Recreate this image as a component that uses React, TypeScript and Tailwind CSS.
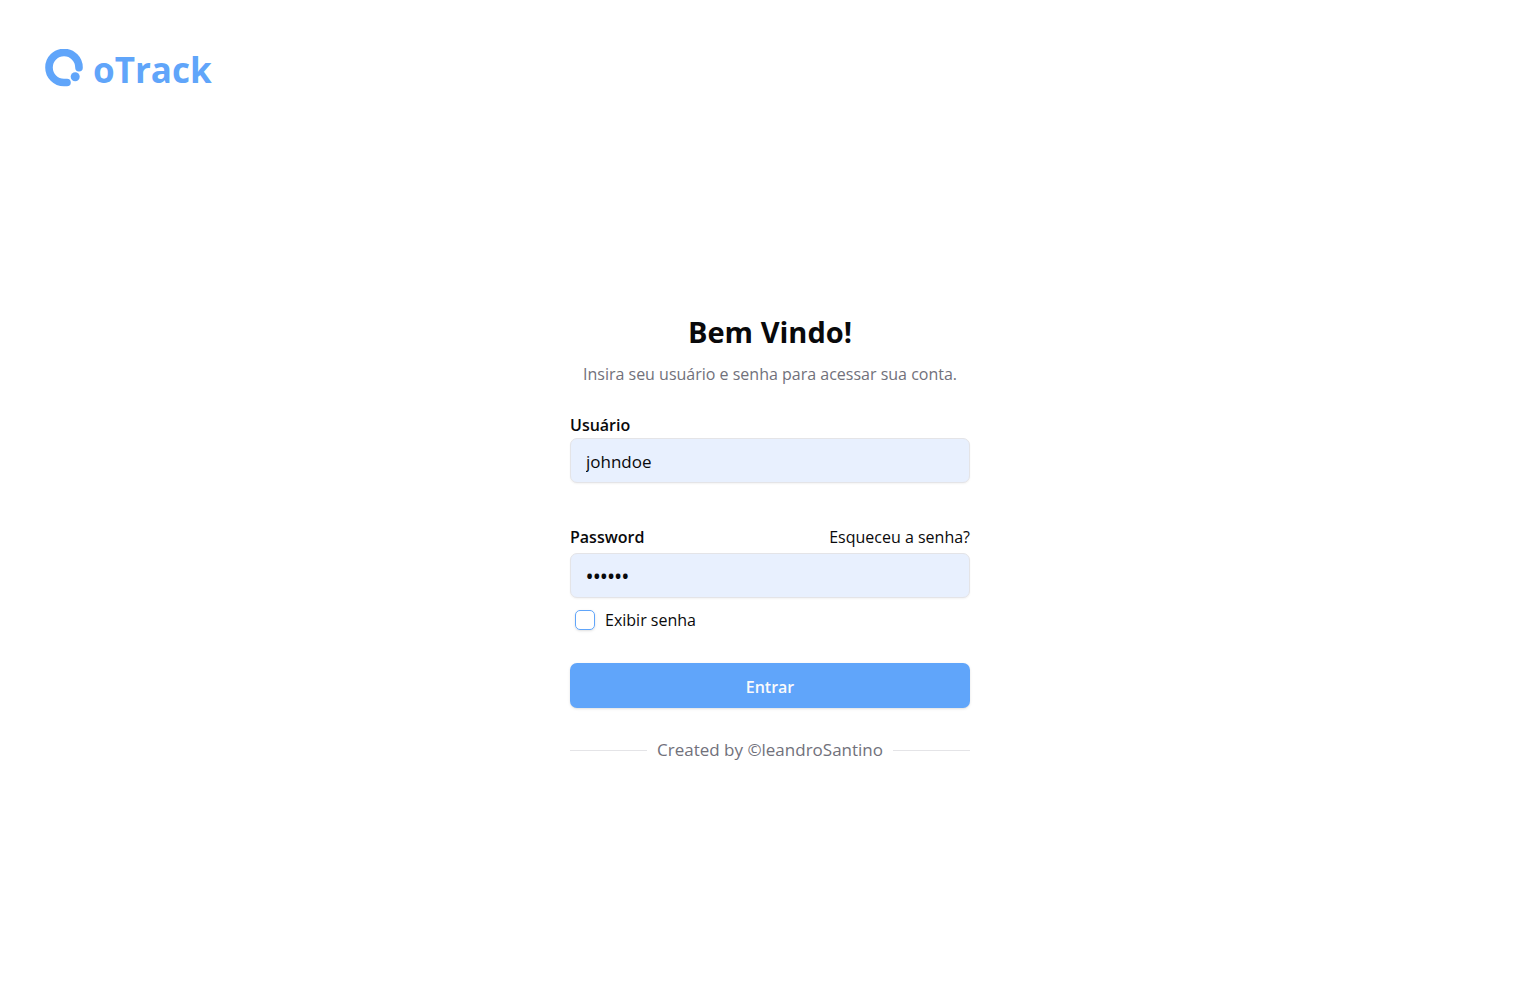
import { useState } from "react";

const fieldClass =
  "block h-[45px] w-full rounded-[7px] border border-zinc-200 bg-[#e8f0fe] px-[15px] pt-0.5 text-zinc-950 shadow-xs outline-none focus:ring-1 focus:ring-[#60a5fa]";

function Logo() {
  return (
    <svg viewBox="0 0 38 38" className="size-[38px]" fill="none" aria-hidden="true">
      <path
        d="M34 18.7A15 15 0 1 0 19 33.5H22"
        stroke="currentColor"
        strokeWidth="7.6"
        strokeLinecap="round"
      />
      <circle cx="30.2" cy="27.7" r="4.5" fill="currentColor" />
    </svg>
  );
}

export default function App() {
  const [user, setUser] = useState("johndoe");
  const [password, setPassword] = useState("123456");
  const [visible, setVisible] = useState(false);

  return (
    <div className="flex min-h-screen flex-col bg-white font-['Segoe_UI','Open_Sans',sans-serif] text-[16px] leading-6 text-zinc-950">
      <header className="flex items-center gap-[10px] px-[45px] pt-[45px] text-[#60a5fa]">
        <Logo />
        <span className="pt-1 text-[35px] leading-[41px] font-bold">oTrack</span>
      </header>

      <main className="flex flex-1 flex-col items-center justify-center pr-4 pb-[18px] pl-[18px]">
        <div className="w-full max-w-[400px]">
          <h1 className="text-center text-[29px] leading-[34px] font-bold">Bem Vindo!</h1>
          <p className="mt-[13px] text-center text-zinc-500">
            Insira seu usuário e senha para acessar sua conta.
          </p>

          <form className="mt-[27px]" onSubmit={(event) => event.preventDefault()}>
            <label htmlFor="user" className="mb-px block font-semibold">
              Usuário
            </label>
            <input
              id="user"
              type="text"
              value={user}
              onChange={(event) => setUser(event.target.value)}
              className={`${fieldClass} text-[17px]`}
            />

            <div className="mt-[42px] mb-1 flex items-center justify-between">
              <label htmlFor="password" className="font-semibold">
                Password
              </label>
              <a href="#recover">Esqueceu a senha?</a>
            </div>
            <input
              id="password"
              type={visible ? "text" : "password"}
              value={password}
              onChange={(event) => setPassword(event.target.value)}
              className={`${fieldClass} ${visible ? "text-[17px]" : "text-[19px] font-semibold"}`}
            />

            <div className="mt-[10px] flex items-center gap-[10px] pl-[5px]">
              <input
                id="show"
                type="checkbox"
                checked={visible}
                onChange={(event) => setVisible(event.target.checked)}
                className="size-5 appearance-none rounded-[5px] border border-[#60a5fa] shadow-sm checked:bg-[#60a5fa]"
              />
              <label htmlFor="show">Exibir senha</label>
            </div>

            <button
              type="submit"
              className="mt-[31px] block h-[45px] w-full rounded-[7px] bg-[#60a5fa] pt-0.5 font-semibold text-zinc-50 shadow-sm"
            >
              Entrar
            </button>
          </form>

          <footer className="mt-[30px] flex items-center gap-[10px] text-[17px] text-zinc-500">
            <span className="h-px flex-1 bg-zinc-200" />
            Created by ©leandroSantino
            <span className="h-px flex-1 bg-zinc-200" />
          </footer>
        </div>
      </main>
    </div>
  );
}
